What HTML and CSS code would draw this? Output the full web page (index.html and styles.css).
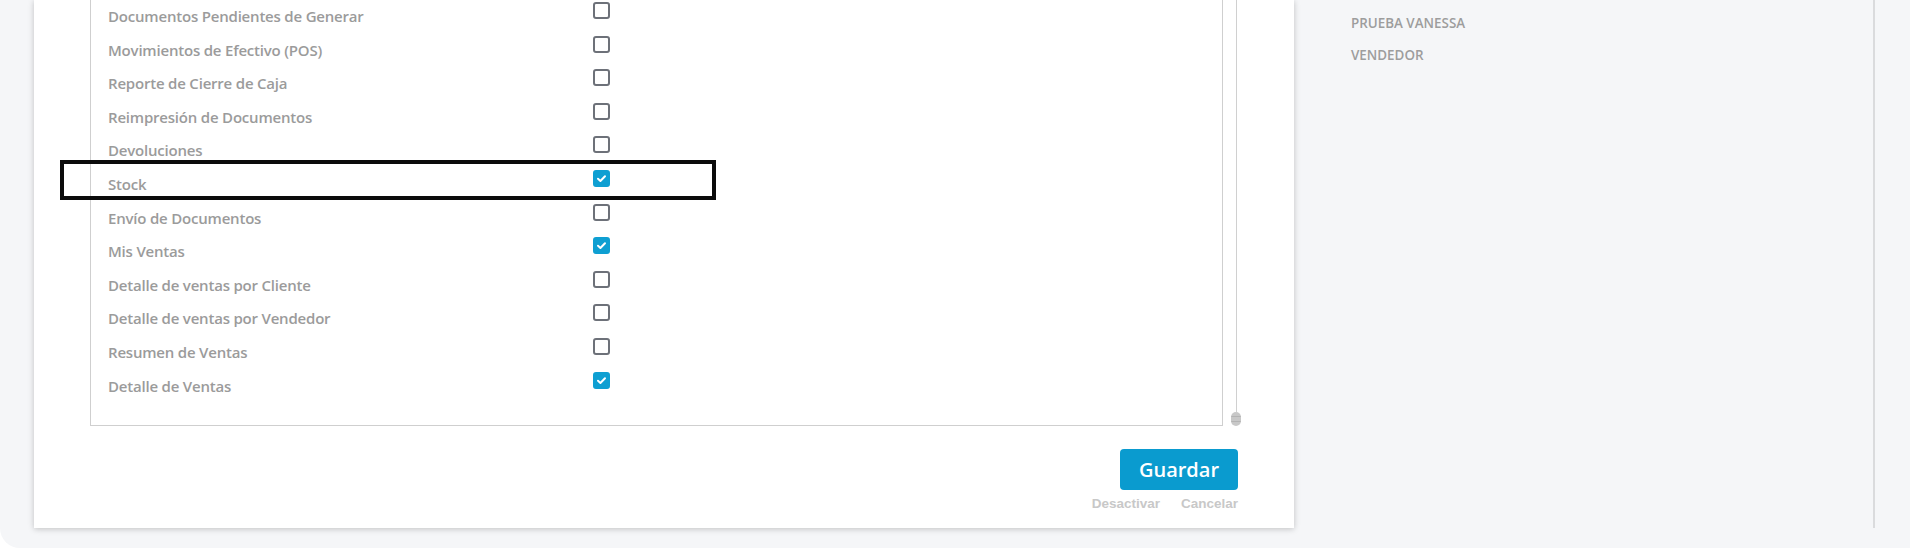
FILE: index.html
```html
<!DOCTYPE html>
<html lang="es">
<head>
  <meta charset="UTF-8">
  <title>Permisos de usuario</title>
  <link rel="stylesheet" href="styles.css">
</head>
<body>
  <div class="page">
    <!-- Main permissions card -->
    <section class="card">
      <div class="list-wrap">
        <div class="list">
          <div class="row"><span class="row-label">Documentos Pendientes de Generar</span><span class="box"></span></div>
          <div class="row"><span class="row-label">Movimientos de Efectivo (POS)</span><span class="box"></span></div>
          <div class="row"><span class="row-label">Reporte de Cierre de Caja</span><span class="box"></span></div>
          <div class="row"><span class="row-label">Reimpresión de Documentos</span><span class="box"></span></div>
          <div class="row"><span class="row-label">Devoluciones</span><span class="box"></span></div>
          <div class="row"><span class="row-label">Stock</span><span class="box on"><svg viewBox="0 0 13 13" width="13" height="13"><path d="M3 6.8 L5.4 9 L10 4.2" fill="none" stroke="#fff" stroke-width="2" stroke-linecap="round" stroke-linejoin="round"/></svg></span></div>
          <div class="row"><span class="row-label">Envío de Documentos</span><span class="box"></span></div>
          <div class="row"><span class="row-label">Mis Ventas</span><span class="box on"><svg viewBox="0 0 13 13" width="13" height="13"><path d="M3 6.8 L5.4 9 L10 4.2" fill="none" stroke="#fff" stroke-width="2" stroke-linecap="round" stroke-linejoin="round"/></svg></span></div>
          <div class="row"><span class="row-label">Detalle de ventas por Cliente</span><span class="box"></span></div>
          <div class="row"><span class="row-label">Detalle de ventas por Vendedor</span><span class="box"></span></div>
          <div class="row"><span class="row-label">Resumen de Ventas</span><span class="box"></span></div>
          <div class="row"><span class="row-label">Detalle de Ventas</span><span class="box on"><svg viewBox="0 0 13 13" width="13" height="13"><path d="M3 6.8 L5.4 9 L10 4.2" fill="none" stroke="#fff" stroke-width="2" stroke-linecap="round" stroke-linejoin="round"/></svg></span></div>
        </div>
        <div class="scroll">
          <span class="scroll-track"></span>
          <span class="scroll-thumb"></span>
        </div>
      </div>

      <div class="actions">
        <button class="btn-save">Guardar</button>
        <div class="links">
          <a href="#">Desactivar</a>
          <a href="#">Cancelar</a>
        </div>
      </div>

      <!-- annotation frame over the Stock row -->
      <div class="highlight"></div>
    </section>

    <!-- User info side -->
    <aside class="side">
      <div class="side-info">
        <p>PRUEBA VANESSA</p>
        <p>VENDEDOR</p>
      </div>
      <div class="side-line"></div>
    </aside>
  </div>
</body>
</html>
```

FILE: styles.css
```css
/* General styling */
body {
  margin: 0;
  background-color: #fff;
  font-family: "Open Sans", sans-serif;
}
.page {
  display: flex;
  height: 548px;
  background-color: #f5f6f8;
  border-bottom-left-radius: 20px;
  overflow: hidden;
}

/* Card */
.card {
  position: relative;
  flex: none;
  width: 1260px;
  height: 528px;
  margin-left: 34px;
  padding: 0 56px;
  box-sizing: border-box;
  background-color: #fff;
  box-shadow: 0 1px 6px rgba(0, 0, 0, 0.22);
  display: flex;
  flex-direction: column;
}
.list-wrap {
  display: flex;
}
.list {
  width: 1133px;
  box-sizing: border-box;
  border: 1px solid #cfcfcf;
  border-top: none;
  padding: 2px 0 20px 17px;
}
.row {
  display: flex;
  align-items: flex-start;
  height: 33.6px;
}
.row-label {
  width: 485px;
  padding-top: 4px;
  font-size: 15px;
  font-weight: 600;
  line-height: 20px;
  letter-spacing: -0.2px;
  color: #9b9b9b;
}
.box {
  width: 17px;
  height: 17px;
  box-sizing: border-box;
  border: 2px solid #6d7179;
  border-radius: 3px;
  background-color: #fff;
  display: flex;
  align-items: center;
  justify-content: center;
}
.box.on {
  background-color: #0e9fd2;
  border-color: #0e9fd2;
}
.box svg {
  display: block;
}

/* Scrollbar */
.scroll {
  width: 15px;
  display: flex;
  flex-direction: column;
  align-items: flex-end;
}
.scroll-track {
  flex: 1;
  width: 1px;
  margin-right: 1px;
  background-color: #d0d0d0;
}
.scroll-thumb {
  width: 10px;
  height: 14px;
  margin-right: -3px;
  border-radius: 5px;
  background: repeating-linear-gradient(#c8c8c8 0, #c8c8c8 4px, #b4b4b4 4px, #b4b4b4 5px);
  background-color: #c8c8c8;
}

/* Actions */
.actions {
  display: flex;
  flex-direction: column;
  align-items: flex-end;
  margin-top: 23px;
}
.btn-save {
  width: 118px;
  height: 41px;
  border: none;
  border-radius: 4px;
  background-color: #0a9bcf;
  color: #fff;
  font-family: "Open Sans", sans-serif;
  font-size: 20px;
  font-weight: 600;
  cursor: pointer;
}
.links {
  display: flex;
  gap: 21px;
  margin-top: 6px;
}
.links a {
  font-family: "Liberation Sans", Arial, sans-serif;
  font-size: 13.5px;
  font-weight: bold;
  line-height: 16px;
  color: #c8c8c8;
  text-decoration: none;
}

.highlight {
  position: absolute;
  left: 26px;
  top: 160px;
  width: 656px;
  height: 40px;
  box-sizing: border-box;
  border: 4px solid #0b0b0b;
}

/* Side panel */
.side {
  flex: 1;
  display: flex;
}
.side-info {
  width: 579px;
  padding: 7px 0 0 57px;
  box-sizing: border-box;
}
.side-info p {
  margin: 0;
  font-size: 13.4px;
  font-weight: 600;
  line-height: 32px;
  color: #9d9d9d;
}
.side-line {
  width: 2px;
  height: 528px;
  background-color: #dadbdd;
}
```
